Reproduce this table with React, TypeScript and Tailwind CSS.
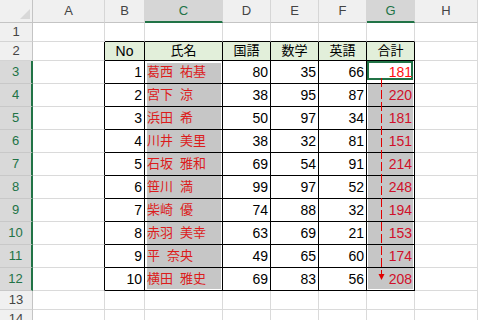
import { Fragment } from "react";

type Row = [number, string, string, number, number, number];

const data: Row[] = [
  [1, "葛西", "祐基", 80, 35, 66],
  [2, "宮下", "涼", 38, 95, 87],
  [3, "浜田", "希", 50, 97, 34],
  [4, "川井", "美里", 38, 32, 81],
  [5, "石坂", "雅和", 69, 54, 91],
  [6, "笹川", "満", 99, 97, 52],
  [7, "柴崎", "優", 74, 88, 32],
  [8, "赤羽", "美幸", 63, 69, 21],
  [9, "平", "奈央", 49, 65, 60],
  [10, "横田", "雅史", 69, 83, 56],
];

const COLS = ["A", "B", "C", "D", "E", "F", "G", "H"];
const HEADERS = ["No", "氏名", "国語", "数学", "英語", "合計"];
const ROWS = Array.from({ length: 14 }, (_, i) => i + 1);

// shared grid borders: black inside the table B2:G12, light gray elsewhere
function borders(r: number, ci: number) {
  const tableRow = r >= 2 && r <= 12;
  const tableCol = ci >= 1 && ci <= 6;
  const right = tableRow && ci <= 6 ? "border-r-black" : "border-r-[#dadada]";
  const bottom = r <= 12 && tableCol ? "border-b-black" : "border-b-[#dadada]";
  return `border-r border-b ${right} ${bottom}`;
}

function nameShade(r: number) {
  if (r === 3) return "bg-[#c6c6c6] shadow-[inset_2px_2px_0_#fff,inset_-1px_0_0_#fff]";
  if (r === 12) return "bg-[#c6c6c6] shadow-[inset_2px_-1px_0_#fff,inset_-1px_0_0_#fff]";
  return "bg-[#c6c6c6] shadow-[inset_2px_0_0_#fff,inset_-1px_0_0_#fff]";
}

function totalShade(r: number) {
  if (r === 12) return "bg-[#c6c6c6] shadow-[inset_1px_-1px_0_#fff,inset_-1px_0_0_#fff]";
  return "bg-[#c6c6c6] shadow-[inset_1px_0_0_#fff,inset_-1px_0_0_#fff]";
}

function Cell({ r, ci }: { r: number; ci: number }) {
  const b = borders(r, ci);

  // table header row
  if (r === 2 && ci >= 1 && ci <= 6) {
    const label = HEADERS[ci - 1];
    return (
      <div className={`${b} flex items-center justify-center bg-[#e2efda] ${ci === 1 ? "text-[14px]" : "text-[13px]"}`}>
        {label}
      </div>
    );
  }

  if (r >= 3 && r <= 12 && ci >= 1 && ci <= 6) {
    const [no, family, given, jp, math, en] = data[r - 3];

    if (ci === 2) {
      return (
        <div className={`${b} ${nameShade(r)} flex items-center pl-[2px] text-[13px] text-[#dc1c1c]`}>
          <span>{family}</span>
          <span className="inline-block w-[7px]"> </span>
          <span>{given}</span>
        </div>
      );
    }

    if (ci === 6) {
      const total = jp + math + en;
      if (r === 3) {
        return (
          <div className={`${b} relative flex items-center justify-end pr-[2px] text-[14px] text-[#ff1010]`}>
            <div className="absolute left-0 right-[1px] top-0 bottom-[3px] border-2 border-[#217346]" />
            <span className="relative">{total}</span>
          </div>
        );
      }
      return (
        <div className={`${b} ${totalShade(r)} flex items-center justify-end pr-[2px] text-[14px] text-[#d0102a]`}>
          {total}
        </div>
      );
    }

    const value = ci === 1 ? no : ci === 3 ? jp : ci === 4 ? math : en;
    return (
      <div className={`${b} flex items-center justify-end pr-[2px] text-[14px]`}>{value}</div>
    );
  }

  return <div className={b} />;
}

export default function App() {
  return (
    <div className="relative h-[320px] w-[478px] overflow-hidden bg-white font-['Liberation_Sans','Noto_Sans_CJK_JP',sans-serif] text-black">
      <div className="grid grid-cols-[33px_72px_40px_78px_48px_48px_48px_48px_1fr] grid-rows-[23px_19px_19px_repeat(10,23px)_19px_19px]">
        {/* Corner */}
        <div className="flex items-end justify-end border-r border-b border-r-[#c4c4c4] border-b-[#c4c4c4] bg-[#f0f0f0] pr-[2px] pb-[3px]">
          <svg width="10" height="10" viewBox="0 0 10 10">
            <polygon points="10,0 10,10 0,10" fill="#d8d8d8" />
          </svg>
        </div>

        {/* Column headers */}
        {COLS.map((c, ci) => {
          const selected = ci === 2 || ci === 6;
          return (
            <div
              key={c}
              className={`flex items-center justify-center border-r border-r-[#d6d6d6] text-[13px] ${
                selected
                  ? "border-b-2 border-b-[#217346] bg-[#d6d6d6] text-[#217346]"
                  : "border-b border-b-[#c4c4c4] bg-[#f0f0f0] text-[#444]"
              }`}
            >
              {c}
            </div>
          );
        })}

        {/* Rows */}
        {ROWS.map((r) => {
          const selected = r >= 3 && r <= 12;
          return (
            <Fragment key={r}>
              <div
                className={`flex items-center justify-center text-[13px] ${
                  selected
                    ? "border-r-2 border-b border-r-[#217346] border-b-[#c8c8c8] bg-[#d9d9d9] text-[#217346]"
                    : "border-r border-b border-r-[#c4c4c4] border-b-[#d4d4d4] bg-[#f0f0f0] text-[#444]"
                }`}
              >
                {r}
              </div>
              {COLS.map((c, ci) => (
                <Cell key={c} r={r} ci={ci} />
              ))}
            </Fragment>
          );
        })}
      </div>

      {/* Fill-down arrow over column G */}
      <svg className="pointer-events-none absolute left-0 top-0" width="478" height="320">
        <line x1="381.5" y1="78" x2="381.5" y2="274" stroke="#e00000" strokeWidth="1" strokeDasharray="9 3" />
        <polygon points="378.5,274 384.5,274 381.5,280" fill="#e00000" />
      </svg>
    </div>
  );
}
